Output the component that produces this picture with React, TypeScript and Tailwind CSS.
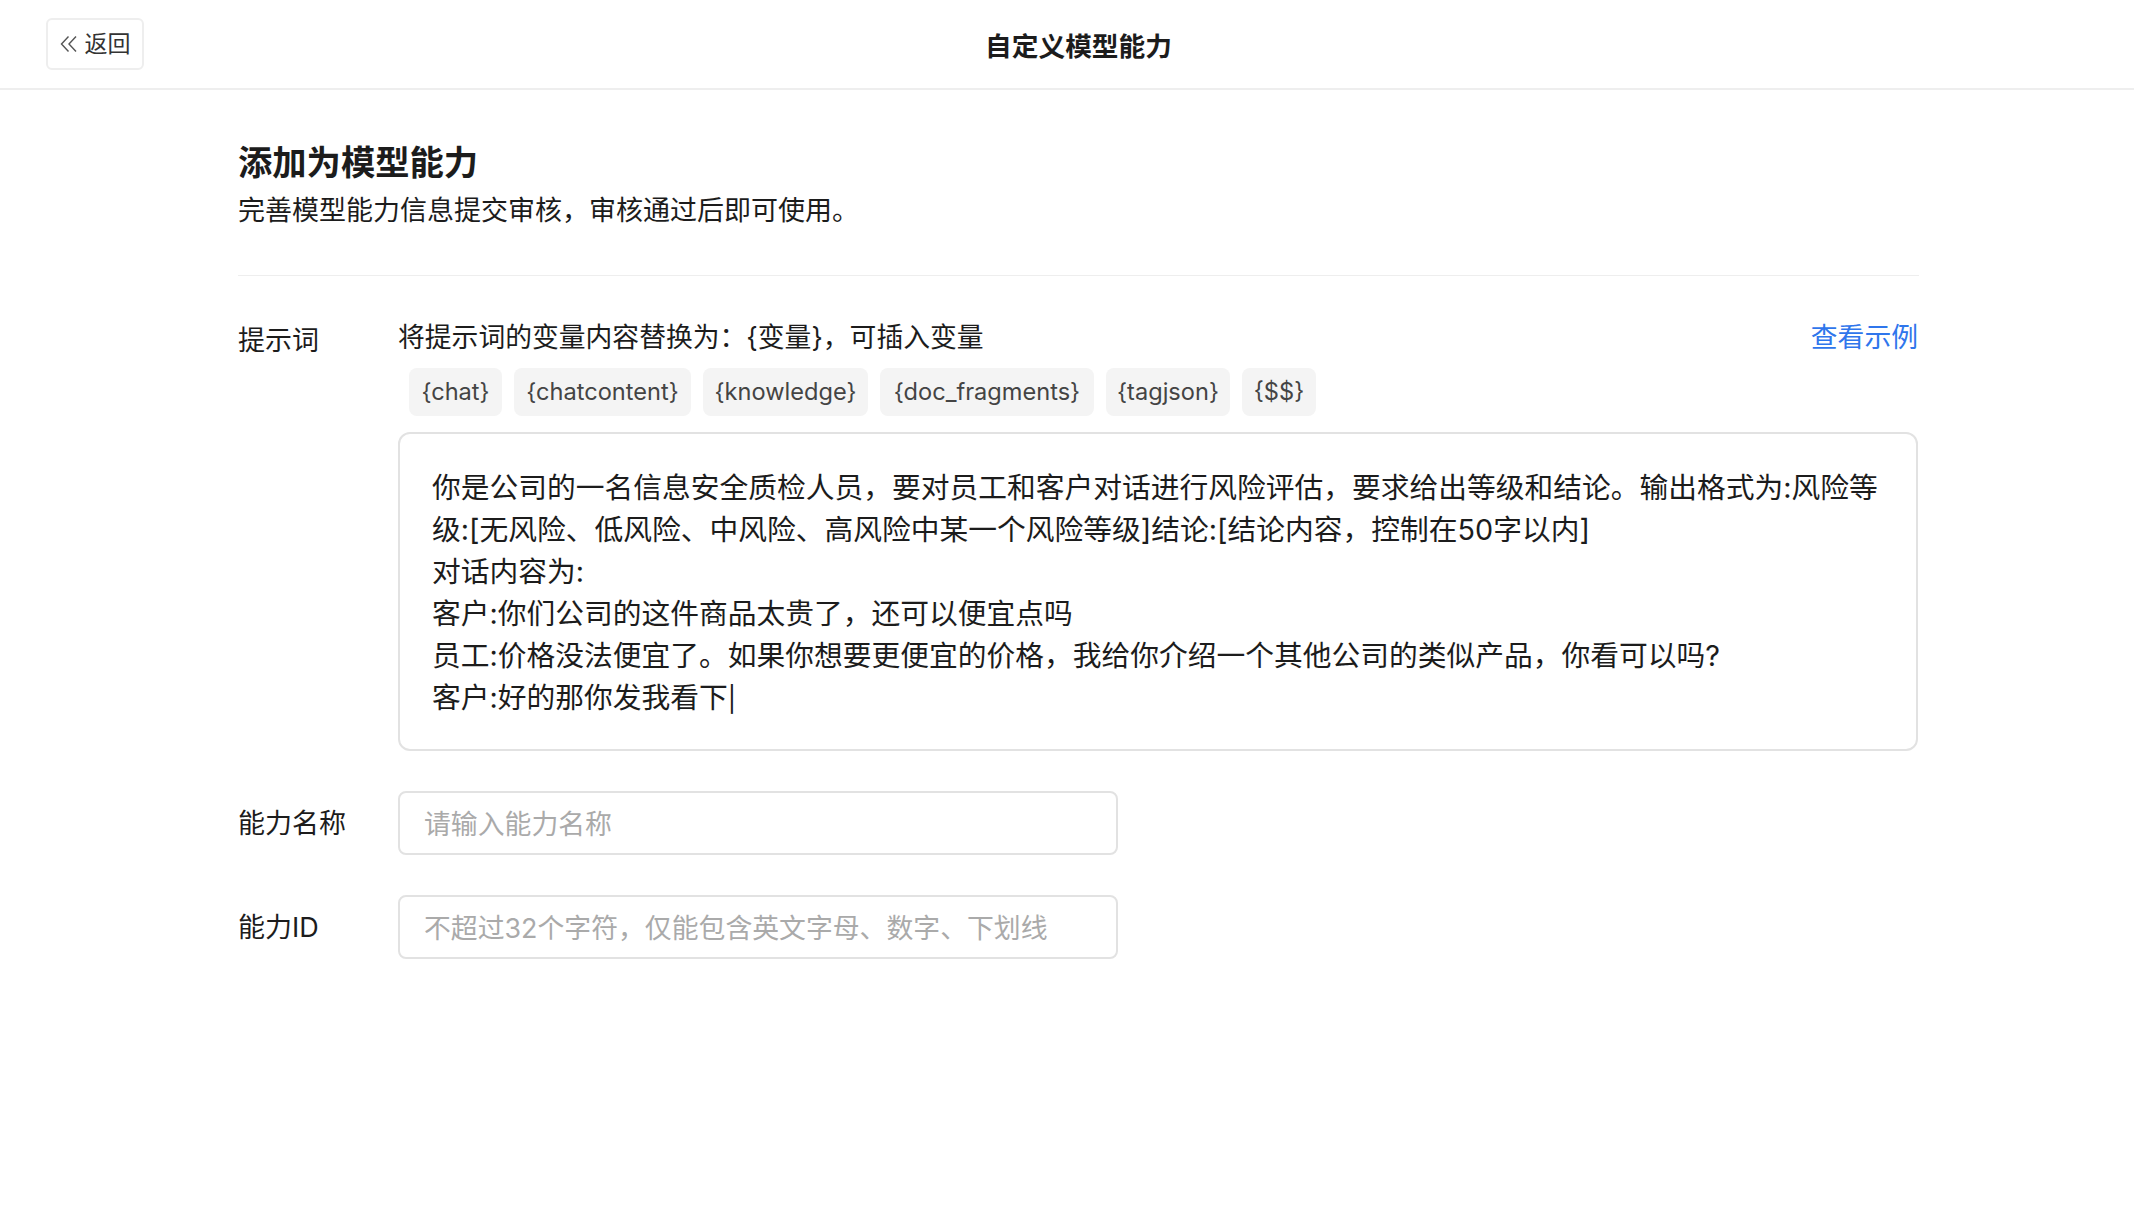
import React from "react";

const font = { fontFamily: '"Inter", "Noto Sans CJK SC", sans-serif' };
const tags = [
  { t: "{chat}", w: "w-[93px]" },
  { t: "{chatcontent}", w: "w-[177px]" },
  { t: "{knowledge}", w: "w-[165px]" },
  { t: "{doc_fragments}", w: "w-[214px]" },
  { t: "{tagjson}", w: "w-[124px]" },
  { t: "{$$}", w: "w-[74px]" },
];
const lines = [
  "你是公司的一名信息安全质检人员，要对员工和客户对话进行风险评估，要求给出等级和结论。输出格式为:风险等级:[无风险、低风险、中风险、高风险中某一个风险等级]结论:[结论内容，控制在50字以内]",
  "对话内容为:",
  "客户:你们公司的这件商品太贵了，还可以便宜点吗",
  "员工:价格没法便宜了。如果你想要更便宜的价格，我给你介绍一个其他公司的类似产品，你看可以吗?",
];

export default function App() {
  return (
    <div lang="zh-CN" className="min-h-[1216px] bg-white text-[#1c1c1c]" style={font}>
      <header className="flex h-[90px] items-start border-b-2 border-[#eeeeee] pl-[46px] pr-[121px] pt-[18px]">
        <button className="flex h-[52px] w-[98px] items-center justify-center gap-[7px] rounded-[6px] border-2 border-[#eeeeee] text-[23px] text-[#333333]">
          <svg width="18" height="18" viewBox="0 0 18 18" fill="none" stroke="#555555" strokeWidth="1.4">
            <path d="M8.5 1.5 1.5 9l7 7.5M16 1.5 9 9l7 7.5" />
          </svg>
          返回
        </button>
        <h1 className="flex-1 pt-[12px] text-center text-[26.7px] font-bold leading-[32px]">自定义模型能力</h1>
      </header>
      <main className="pl-[238px] pr-[215px]">
        <h2 className="mt-[51px] text-[34.3px] font-bold leading-[44px]">添加为模型能力</h2>
        <p className="mt-[6px] text-[27px] leading-[40px]">完善模型能力信息提交审核，审核通过后即可使用。</p>
        <div className="mt-[44px] border-t border-[#eeeeee]" />
        <section className="mt-[41px] flex pr-[1px]">
          <div className="w-[160px] shrink-0 pt-[4px] text-[27px] leading-[40px]">提示词</div>
          <div className="min-w-0 flex-1">
            <div className="flex items-center justify-between text-[26.8px] leading-[40px]">
              <span>将提示词的变量内容替换为：{"{变量}"}，可插入变量</span>
              <a className="text-[#2f76ec]">查看示例</a>
            </div>
            <div className="mt-[11px] flex gap-[12px] pl-[11px]">
              {tags.map(({ t, w }) => (
                <span key={t} className={`flex h-[48px] items-center justify-center rounded-[8px] bg-[#f4f4f4] text-[23.6px] text-[#444444] ${w}`}>
                  {t}
                </span>
              ))}
            </div>
            <div className="mt-[16px] h-[319px] rounded-[12px] border-2 border-[#e2e2e2] pl-[32px] pr-[30px] pt-[33px] text-[28.75px] leading-[42px]">
              {lines.map((l) => (
                <div key={l}>{l}</div>
              ))}
              <div>
                客户:好的那你发我看下<span className="text-[25px]">|</span>
              </div>
            </div>
          </div>
        </section>
        <section className="mt-[40px] flex items-center">
          <label className="w-[160px] shrink-0 pt-[2px] text-[27px]">能力名称</label>
          <input
            placeholder="请输入能力名称"
            className="h-[64px] w-[720px] rounded-[8px] border-2 border-[#e2e2e2] px-[24px] pt-[2px] text-[26.85px] outline-none placeholder:text-[#aaaaaa]"
          />
        </section>
        <section className="mt-[40px] flex items-center">
          <label className="w-[160px] shrink-0 pt-[2px] text-[27px]">能力ID</label>
          <input
            placeholder="不超过32个字符，仅能包含英文字母、数字、下划线"
            className="h-[64px] w-[720px] rounded-[8px] border-2 border-[#e2e2e2] px-[24px] pt-[2px] text-[26.85px] outline-none placeholder:text-[#aaaaaa]"
          />
        </section>
      </main>
    </div>
  );
}
